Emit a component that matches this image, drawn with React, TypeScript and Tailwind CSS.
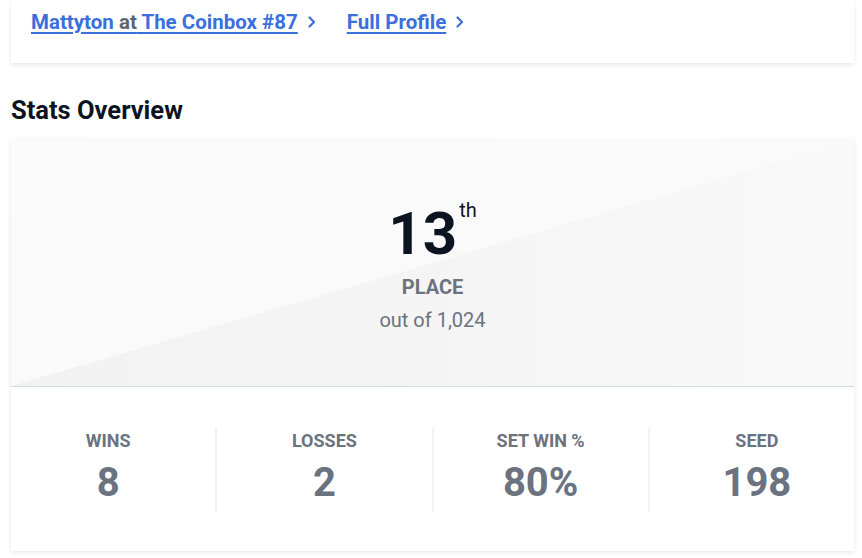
import React from 'react'

const Chevron = () => (
    <svg width="10" height="12" viewBox="0 0 10 12" fill="none" className="ml-[9px] shrink-0">
        <path d="M2.5 1.5 L7 6 L2.5 10.5" stroke="currentColor" strokeWidth="2.2" strokeLinecap="round" strokeLinejoin="round" />
    </svg>
)

const stats = [
    { label: 'WINS', value: '8' },
    { label: 'LOSSES', value: '2' },
    { label: 'SET WIN %', value: '80%' },
    { label: 'SEED', value: '198' },
]

const App = () => {
    return (
        <div className="min-h-screen bg-white pl-[11px] pr-[8px] font-['Roboto',sans-serif]">
            {/* event header card, scrolled so only the links show */}
            <div className="bg-white shadow-[0_2px_5px_rgba(0,0,0,0.09)] px-5 pt-2 pb-[27px] flex items-center gap-[30px]">
                <a href="#" className="flex items-center text-[20.5px] leading-7 font-bold text-[#3b6fdc]">
                    <span className="underline underline-offset-[3px] decoration-2">
                        Mattyton <span className="text-[#5c6470]">at</span> The Coinbox #87
                    </span>
                    <Chevron />
                </a>
                <a href="#" className="flex items-center text-[20.5px] leading-7 font-bold text-[#3b6fdc]">
                    <span className="underline underline-offset-[3px] decoration-2">Full Profile</span>
                    <Chevron />
                </a>
            </div>

            <h2 className="mt-[31px] mb-[14px] text-[25.5px] leading-8 font-bold text-[#0d1421]">Stats Overview</h2>

            <div className="bg-white shadow-[0_1px_5px_rgba(0,0,0,0.1)]">
                <div className="flex flex-col items-center pt-[64px] pb-[52px] border-b border-[#d6dae1] bg-[linear-gradient(to_top_left,transparent_50%,#fafafa_50%,#fbfbfb_100%),linear-gradient(to_right,#f2f2f2,#f5f5f5_60%,#f9f9f9)]">
                    <div className="flex items-start">
                        <span className="text-[60px] leading-none font-bold text-[#0d1421]">13</span>
                        <span className="text-xl leading-7 -mt-2 ml-[2px] text-[#0d1421]">th</span>
                    </div>
                    <div className="mt-[9px] text-xl leading-7 font-bold text-[#6b7280]">PLACE</div>
                    <div className="mt-[5px] text-xl leading-7 text-[#6b7280]">out of 1,024</div>
                </div>

                <div className="flex pt-10 pb-[39px]">
                    {stats.map((s, i) => (
                        <React.Fragment key={s.label}>
                            {i > 0 && <div className="w-[2px] mx-[10px] bg-[#f3f4f6] shrink-0" />}
                            <div className="flex-1 flex flex-col items-center pb-[9px]">
                                <div className="text-lg leading-7 font-bold text-[#6b7280]">{s.label}</div>
                                <div className="mt-2 text-[40px] leading-10 font-bold text-[#6b7280]">{s.value}</div>
                            </div>
                        </React.Fragment>
                    ))}
                </div>
            </div>
        </div>
    )
}

export default App
